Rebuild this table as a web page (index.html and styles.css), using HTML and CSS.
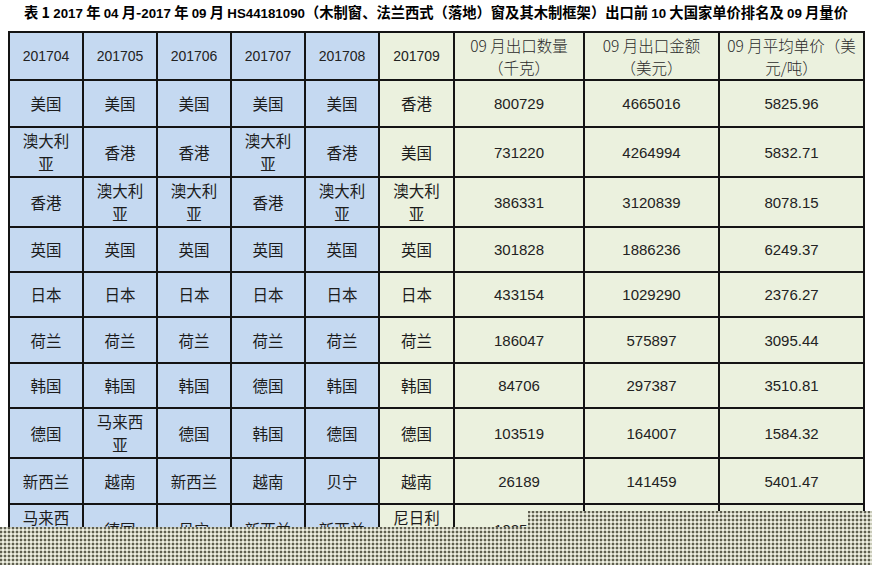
FILE: index.html
```html
<!DOCTYPE html>
<html lang="zh-CN">
<head>
<meta charset="utf-8">
<title>表1</title>
<link rel="stylesheet" href="styles.css">
</head>
<body>
<div class="page">
  <h1 class="title">表 1 <span class="num">2017</span> 年 <span class="num">04</span> 月-<span class="num">2017</span> 年 <span class="num">09</span> 月 <span class="num">HS44181090</span>（木制窗、法兰西式（落地）窗及其木制框架）出口前 <span class="num">10</span> 大国家单价排名及 <span class="num">09</span> 月量价</h1>
  <table class="grid">
    <colgroup>
      <col class="c-m"><col class="c-m"><col class="c-m"><col class="c-m"><col class="c-m"><col class="c-m6">
      <col class="c-q"><col class="c-v"><col class="c-p">
    </colgroup>
    <tr class="r-head">
      <td class="b hnum">201704</td><td class="b hnum">201705</td><td class="b hnum">201706</td><td class="b hnum">201707</td><td class="b hnum">201708</td><td class="g hnum">201709</td>
      <td class="g head">09 月出口数量<br>（千克）</td><td class="g head">09 月出口金额<br>（美元）</td><td class="g head">09 月平均单价（美<br>元/吨）</td>
    </tr>
    <tr class="r47">
      <td class="b">美国</td><td class="b">美国</td><td class="b">美国</td><td class="b">美国</td><td class="b">美国</td><td class="g">香港</td>
      <td class="g n">800729</td><td class="g n">4665016</td><td class="g n">5825.96</td>
    </tr>
    <tr class="r50">
      <td class="b">澳大利<br>亚</td><td class="b">香港</td><td class="b">香港</td><td class="b">澳大利<br>亚</td><td class="b">香港</td><td class="g">美国</td>
      <td class="g n">731220</td><td class="g n">4264994</td><td class="g n">5832.71</td>
    </tr>
    <tr class="r51">
      <td class="b">香港</td><td class="b">澳大利<br>亚</td><td class="b">澳大利<br>亚</td><td class="b">香港</td><td class="b">澳大利<br>亚</td><td class="g">澳大利<br>亚</td>
      <td class="g n">386331</td><td class="g n">3120839</td><td class="g n">8078.15</td>
    </tr>
    <tr class="r45">
      <td class="b">英国</td><td class="b">英国</td><td class="b">英国</td><td class="b">英国</td><td class="b">英国</td><td class="g">英国</td>
      <td class="g n">301828</td><td class="g n">1886236</td><td class="g n">6249.37</td>
    </tr>
    <tr class="r45">
      <td class="b">日本</td><td class="b">日本</td><td class="b">日本</td><td class="b">日本</td><td class="b">日本</td><td class="g">日本</td>
      <td class="g n">433154</td><td class="g n">1029290</td><td class="g n">2376.27</td>
    </tr>
    <tr class="r46">
      <td class="b">荷兰</td><td class="b">荷兰</td><td class="b">荷兰</td><td class="b">荷兰</td><td class="b">荷兰</td><td class="g">荷兰</td>
      <td class="g n">186047</td><td class="g n">575897</td><td class="g n">3095.44</td>
    </tr>
    <tr class="r45">
      <td class="b">韩国</td><td class="b">韩国</td><td class="b">韩国</td><td class="b">德国</td><td class="b">韩国</td><td class="g">韩国</td>
      <td class="g n">84706</td><td class="g n">297387</td><td class="g n">3510.81</td>
    </tr>
    <tr class="r51">
      <td class="b">德国</td><td class="b">马来西<br>亚</td><td class="b">德国</td><td class="b">韩国</td><td class="b">德国</td><td class="g">德国</td>
      <td class="g n">103519</td><td class="g n">164007</td><td class="g n">1584.32</td>
    </tr>
    <tr class="r46">
      <td class="b">新西兰</td><td class="b">越南</td><td class="b">新西兰</td><td class="b">越南</td><td class="b">贝宁</td><td class="g">越南</td>
      <td class="g n">26189</td><td class="g n">141459</td><td class="g n">5401.47</td>
    </tr>
    <tr class="r50">
      <td class="b">马来西<br>亚</td><td class="b">德国</td><td class="b">贝宁</td><td class="b">新西兰</td><td class="b">新西兰</td><td class="g">尼日利<br>亚</td>
      <td class="g n">102584</td><td class="g n">126310</td><td class="g n">1231.26</td>
    </tr>
  </table>
  <div class="veil veil-low"></div>
  <div class="veil veil-high"></div>
</div>
</body>
</html>
```

FILE: styles.css
```css
html, body {
  margin: 0;
  padding: 0;
  background: #ffffff;
}
body {
  width: 872px;
  height: 565px;
  overflow: hidden;
  font-family: "Noto Sans CJK SC", "Liberation Sans", sans-serif;
  color: #1c1c1c;
}
.page {
  position: relative;
  width: 872px;
  height: 565px;
  overflow: hidden;
  padding: 0 8px;
  box-sizing: border-box;
}
.title {
  margin: 0;
  height: 24px;
  line-height: 24px;
  font-size: 14.3px;
  font-weight: 700;
  text-align: center;
  white-space: nowrap;
  color: #000;
  margin-bottom: 7px;
}
.title .num {
  font-family: "Liberation Sans", sans-serif;
  font-size: 13.3px;
}
.grid {
  border-collapse: collapse;
  table-layout: fixed;
  width: 855px;
}
.c-m { width: 74px; }
.c-m6 { width: 75px; }
.c-q { width: 130px; }
.c-v { width: 135px; }
.c-p { width: 145px; }
.grid td {
  border: 2px solid #141414;
  text-align: center;
  vertical-align: middle;
  padding: 0 4px;
  font-size: 15.5px;
  line-height: 23px;
  overflow: hidden;
  white-space: nowrap;
}
.grid td.b { background: #c5d9f1; }
.grid td.g { background: #ebf1de; }
.grid td.n {
  font-family: "Liberation Sans", sans-serif;
  font-size: 15px;
  color: #222;
}
.grid td.hnum {
  font-family: "Liberation Sans", sans-serif;
  font-size: 14px;
  color: #222;
}
.grid td.head {
  font-size: 15.5px;
  line-height: 22px;
  color: #2a2a2a;
  font-weight: 300;
}
.r-head { height: 48px; }
.r45 { height: 45px; }
.r46 { height: 46px; }
.r47 { height: 47px; }
.r50 { height: 50px; }
.r51 { height: 50px; }
.veil {
  position: absolute;
  right: 0;
  bottom: 0;
  background-color: #c8cab8;
  background-image:
    radial-gradient(circle at 1px 1px, #5e5e50 0.9px, transparent 1.1px),
    radial-gradient(circle at 3px 3px, #eeeee4 0.8px, transparent 1px);
  background-size: 4px 4px, 4px 4px;
}
.veil-low {
  left: 0;
  top: 527px;
}
.veil-high {
  left: 528px;
  top: 511px;
}
```
